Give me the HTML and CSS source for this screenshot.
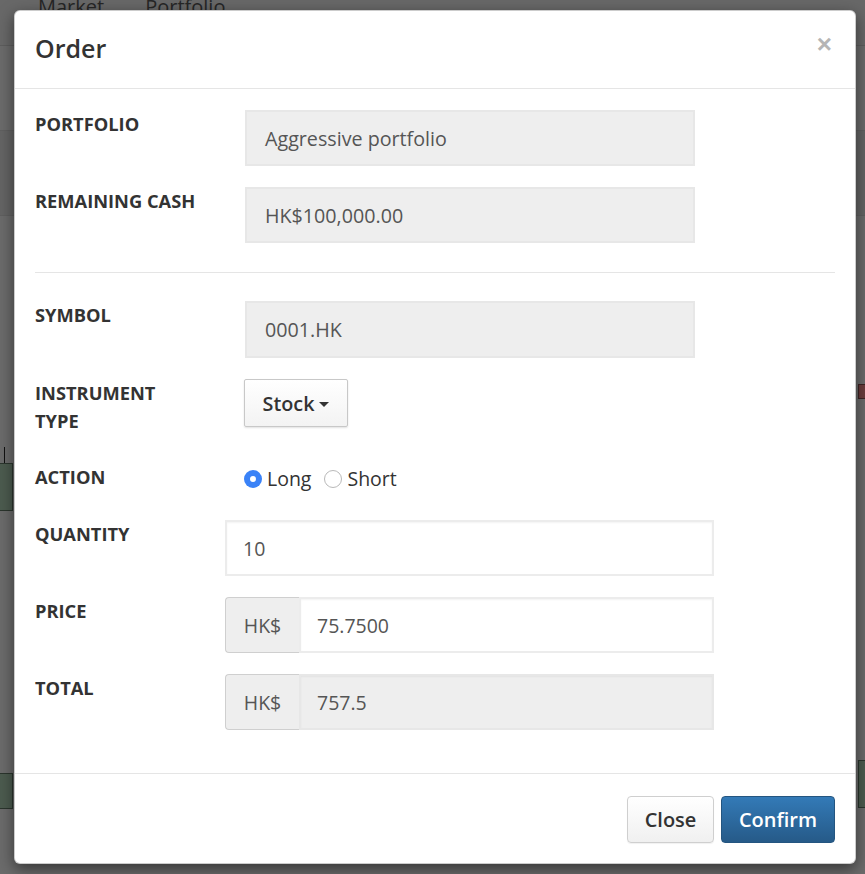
FILE: index.html
```html
<!DOCTYPE html>
<html>
<head>
<meta charset="utf-8">
<title>Order</title>
<link rel="stylesheet" href="styles.css">
</head>
<body>
<div class="page">
  <nav class="nav">
    <span class="nav-link">Market</span>
    <span class="nav-link">Portfolio</span>
  </nav>
  <div class="band"></div>
  <div class="chart">
    <span class="wick"></span>
    <span class="candle green c1"></span>
    <span class="candle green c2"></span>
    <span class="candle red c3"></span>
    <span class="candle green c4"></span>
  </div>
</div>

<div class="modal">
  <div class="modal-header">
    <h4 class="modal-title">Order</h4>
    <span class="close">&times;</span>
  </div>
  <div class="modal-body">
    <div class="group">
      <div class="row">
        <div class="label">PORTFOLIO</div>
        <div class="static">Aggressive portfolio</div>
      </div>
      <div class="row">
        <div class="label">REMAINING CASH</div>
        <div class="static">HK$100,000.00</div>
      </div>
    </div>
    <hr class="divider">
    <div class="group">
      <div class="row">
        <div class="label">SYMBOL</div>
        <div class="static tall">0001.HK</div>
      </div>
      <div class="row">
        <div class="label">INSTRUMENT TYPE</div>
        <div class="dropdown">Stock <span class="caret"></span></div>
      </div>
      <div class="row row-action">
        <div class="label label-pad">ACTION</div>
        <div class="radios">
          <span class="radio checked"></span><span class="radio-text">Long</span>
          <span class="radio"></span><span class="radio-text">Short</span>
        </div>
      </div>
      <div class="row">
        <div class="label">QUANTITY</div>
        <div class="input">10</div>
      </div>
      <div class="row">
        <div class="label">PRICE</div>
        <div class="input-group">
          <span class="addon">HK$</span>
          <span class="input-inner">75.7500</span>
        </div>
      </div>
      <div class="row">
        <div class="label">TOTAL</div>
        <div class="input-group">
          <span class="addon">HK$</span>
          <span class="input-inner readonly">757.5</span>
        </div>
      </div>
    </div>
  </div>
  <div class="modal-footer">
    <button class="btn btn-default">Close</button>
    <button class="btn btn-primary">Confirm</button>
  </div>
</div>
</body>
</html>
```

FILE: styles.css
```css
* { box-sizing: border-box; }

html, body {
  margin: 0;
  padding: 0;
}

body {
  width: 865px;
  height: 874px;
  overflow: hidden;
  position: relative;
  background: #6b6b6b;
  font-family: "Open Sans", "Liberation Sans", sans-serif;
  color: #333;
}

/* ---------- dimmed page behind the modal ---------- */
.page {
  height: 874px;
}

.nav {
  height: 46px;
  border-bottom: 1px solid #5d5d5d;
  background: #686868;
  display: flex;
  padding-left: 38px;
}

.nav-link {
  font-size: 20px;
  line-height: 24px;
  margin-top: -5px;
  margin-right: 41px;
  color: #262626;
}

.band {
  margin-top: 84px;
  height: 86px;
  background: #646464;
  border-top: 1px solid #5f5f5f;
  border-bottom: 1px solid #5f5f5f;
}

.chart { position: relative; }

.wick {
  position: absolute;
  left: 4px;
  top: 231px;
  width: 1px;
  height: 17px;
  background: #111;
}

.candle {
  position: absolute;
  border: 1px solid #2b352d;
}

.green { background: #4c5b4f; }
.red { background: #6a3b3b; border-color: #3d2424; }

.c1 { left: -2px; top: 247px; width: 15px; height: 48px; }
.c2 { left: -2px; top: 557px; width: 15px; height: 36px; }
.c3 { left: 858px; top: 168px; width: 12px; height: 15px; }
.c4 { left: 858px; top: 544px; width: 12px; height: 48px; }

/* ---------- modal ---------- */
.modal {
  position: absolute;
  left: 14px;
  top: 10px;
  width: 842px;
  background: #fff;
  border: 1px solid rgba(0, 0, 0, 0.2);
  border-radius: 6px;
  box-shadow: 0 5px 15px rgba(0, 0, 0, 0.5);
}

.modal-header {
  height: 78px;
  border-bottom: 1px solid #e5e5e5;
  display: flex;
  align-items: center;
  justify-content: space-between;
  padding: 0 22px 3px 20px;
}

.modal-title {
  margin: 0;
  font-size: 25px;
  font-weight: 600;
  line-height: 1;
  color: #333;
}

.close {
  font-family: "Liberation Sans", "Open Sans", sans-serif;
  font-size: 26px;
  font-weight: 700;
  line-height: 1;
  color: #b5b5b5;
  margin-top: -8px;
  margin-right: 1px;
}

.modal-body {
  padding: 21px 20px 43px;
}

.group {
  display: flex;
  flex-direction: column;
  gap: 21px;
}

.divider {
  border: 0;
  border-top: 1px solid #e5e5e5;
  margin: 29px 0 28px;
  height: 0;
}

.row {
  display: flex;
  align-items: flex-start;
}

.label {
  width: 190px;
  flex: none;
  font-size: 18.3px;
  font-weight: 700;
  line-height: 28px;
  color: #333;
  padding-right: 26px;
}

.label-pad { padding-top: 7px; }

.static {
  margin-left: 20px;
  width: 450px;
  height: 56px;
  background: #eee;
  border: 2px solid #e7e7e7;
  padding: 0 18px;
  font-size: 19.7px;
  color: #555;
  display: flex;
  align-items: center;
}

.static.tall { height: 57px; }

.dropdown {
  margin-left: 19px;
  width: 104px;
  height: 48px;
  border: 1px solid #c8c8c8;
  border-radius: 2px;
  background: linear-gradient(#fff, #f3f3f3);
  box-shadow: 0 1px 2px rgba(0, 0, 0, 0.12);
  display: flex;
  align-items: center;
  justify-content: center;
  gap: 5px;
  font-size: 19.8px;
  font-weight: 600;
  color: #333;
}

.caret {
  width: 0;
  height: 0;
  border-left: 5px solid transparent;
  border-right: 5px solid transparent;
  border-top: 5px solid #333;
  margin-top: 2px;
}

.row-action { height: 43px; }

.radios {
  margin-left: 19px;
  height: 43px;
  padding-top: 2px;
  display: flex;
  align-items: center;
  font-size: 19.5px;
  color: #333;
}

.radio {
  width: 18px;
  height: 18px;
  border-radius: 50%;
  border: 1px solid #b9b9b9;
  background: #fff;
  display: flex;
  align-items: center;
  justify-content: center;
  flex: none;
}

.radio.checked {
  border: none;
  background: #3a82f7;
}

.radio.checked::after {
  content: "";
  width: 6px;
  height: 6px;
  border-radius: 50%;
  background: #fff;
}

.radio-text {
  margin-left: 5px;
  margin-right: 13px;
}

.input {
  width: 489px;
  height: 56px;
  border: 2px solid #ececec;
  box-shadow: inset 0 1px 2px rgba(0, 0, 0, 0.05);
  background: #fff;
  padding: 0 16px;
  font-size: 19.5px;
  color: #555;
  display: flex;
  align-items: center;
}

.input-group {
  width: 489px;
  height: 56px;
  display: flex;
}

.addon {
  width: 74px;
  flex: none;
  background: #eee;
  border: 1px solid #cfcfcf;
  border-right: 0;
  border-radius: 4px 0 0 4px;
  font-size: 19.5px;
  color: #555;
  display: flex;
  align-items: center;
  justify-content: center;
}

.input-inner {
  flex: 1;
  border: 2px solid #ececec;
  box-shadow: inset 0 1px 2px rgba(0, 0, 0, 0.05);
  background: #fff;
  padding: 0 16px;
  font-size: 19.5px;
  color: #555;
  display: flex;
  align-items: center;
}

.input-inner.readonly {
  background: #eee;
  border-color: #e7e7e7;
}

.modal-footer {
  border-top: 1px solid #e5e5e5;
  padding: 22px 20px 20px;
  display: flex;
  justify-content: flex-end;
  gap: 7px;
}

.btn {
  height: 47px;
  border-radius: 4px;
  font-family: "Open Sans", "Liberation Sans", sans-serif;
  font-size: 20px;
  font-weight: 600;
  padding: 0;
  cursor: pointer;
}

.btn-default {
  width: 87px;
  background: linear-gradient(#fff, #f0f0f0);
  border: 1px solid #cfcfcf;
  color: #333;
  box-shadow: 0 1px 1px rgba(0, 0, 0, 0.06);
}

.btn-primary {
  width: 114px;
  background: linear-gradient(#337ab7, #265a88);
  border: 1px solid #245580;
  color: #fff;
}
```
